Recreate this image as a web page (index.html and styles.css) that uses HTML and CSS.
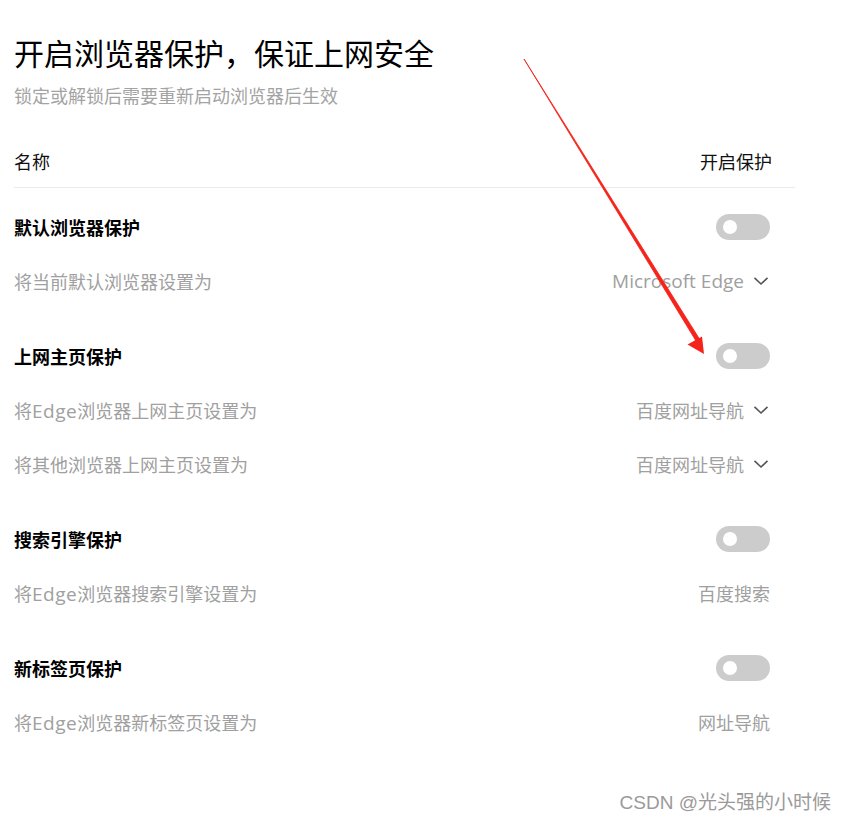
FILE: index.html
```html
<!DOCTYPE html>
<html lang="zh-CN">
<head>
<meta charset="utf-8">
<title>开启浏览器保护</title>
<link rel="stylesheet" href="styles.css">
</head>
<body>
<div class="page">
  <h1 class="title">开启浏览器保护，保证上网安全</h1>
  <p class="sub">锁定或解锁后需要重新启动浏览器后生效</p>
  <div class="head">
    <span>名称</span>
    <span class="head-right">开启保护</span>
  </div>
  <div class="list">
    <section class="group">
      <div class="row">
        <span class="name">默认浏览器保护</span>
        <span class="toggle"><span class="knob"></span></span>
      </div>
      <div class="row">
        <span class="label">将当前默认浏览器设置为</span>
        <span class="value latin">Microsoft Edge<svg class="chev" viewBox="0 0 16 10" width="16" height="10"><path d="M1.5 1.8 L8 8 L14.5 1.8" fill="none" stroke="#555" stroke-width="1.6"/></svg></span>
      </div>
    </section>
    <section class="group">
      <div class="row">
        <span class="name">上网主页保护</span>
        <span class="toggle"><span class="knob"></span></span>
      </div>
      <div class="row">
        <span class="label">将<span class="en">Edge</span>浏览器上网主页设置为</span>
        <span class="value">百度网址导航<svg class="chev" viewBox="0 0 16 10" width="16" height="10"><path d="M1.5 1.8 L8 8 L14.5 1.8" fill="none" stroke="#555" stroke-width="1.6"/></svg></span>
      </div>
      <div class="row">
        <span class="label">将其他浏览器上网主页设置为</span>
        <span class="value">百度网址导航<svg class="chev" viewBox="0 0 16 10" width="16" height="10"><path d="M1.5 1.8 L8 8 L14.5 1.8" fill="none" stroke="#555" stroke-width="1.6"/></svg></span>
      </div>
    </section>
    <section class="group">
      <div class="row">
        <span class="name">搜索引擎保护</span>
        <span class="toggle"><span class="knob"></span></span>
      </div>
      <div class="row">
        <span class="label">将<span class="en">Edge</span>浏览器搜索引擎设置为</span>
        <span class="value">百度搜索</span>
      </div>
    </section>
    <section class="group">
      <div class="row">
        <span class="name">新标签页保护</span>
        <span class="toggle"><span class="knob"></span></span>
      </div>
      <div class="row">
        <span class="label">将<span class="en">Edge</span>浏览器新标签页设置为</span>
        <span class="value">网址导航</span>
      </div>
    </section>
  </div>
</div>
<svg class="arrow" width="846" height="822" viewBox="0 0 846 822">
  <path d="M524 59 L696 341 L699.5 339 Z" fill="#f5231b" stroke="#f5231b" stroke-width="0.8" stroke-linejoin="round"/>
  <path d="M704 354 L687.5 344.5 L702 336.5 Z" fill="#f5231b"/>
</svg>
<div class="watermark">CSDN @光头强的小时候</div>
</body>
</html>
```

FILE: styles.css
```css
html, body {
  margin: 0;
  padding: 0;
  background: #fff;
}
body {
  width: 846px;
  height: 822px;
  position: relative;
  overflow: hidden;
  font-family: "Microsoft YaHei", "Noto Sans CJK SC", "Noto Sans", sans-serif;
  color: #000;
}
.page {
  padding: 32px 0 0 14px;
  width: 781px;
}
.title {
  margin: 0;
  font-size: 30px;
  font-weight: 400;
  line-height: 40px;
  color: #000;
}
.sub {
  margin: 11px 0 0;
  font-size: 18px;
  line-height: 24px;
  color: #a3a3a3;
}
.head {
  margin-top: 42px;
  height: 24px;
  line-height: 24px;
  padding: 0 23px 14px 0;
  border-bottom: 1px solid #eaeaea;
  display: flex;
  justify-content: space-between;
  font-size: 18px;
  color: #111;
}
.list {
  padding: 12px 25px 0 0;
  display: flex;
  flex-direction: column;
  gap: 21px;
}
.row {
  height: 54px;
  display: flex;
  align-items: center;
  justify-content: space-between;
  font-size: 18px;
}
.name {
  font-weight: 700;
  color: #000;
}
.label {
  color: #a0a0a0;
}
.en {
  font-family: "Open Sans", "Noto Sans", sans-serif;
  font-size: 19px;
  letter-spacing: 0.5px;
}
.value {
  color: #a0a0a0;
  display: flex;
  align-items: center;
}
.latin {
  font-family: "Open Sans", "Noto Sans", sans-serif;
  font-size: 19px;
}
.chev {
  margin-left: 9px;
  margin-right: 1px;
}
.toggle {
  width: 54px;
  height: 26px;
  border-radius: 13px;
  background: #cccccc;
  display: flex;
  align-items: center;
  padding-left: 7px;
  box-sizing: border-box;
}
.knob {
  width: 14px;
  height: 14px;
  border-radius: 50%;
  background: #fff;
}
.arrow {
  position: absolute;
  left: 0;
  top: 0;
  pointer-events: none;
}
.watermark {
  position: absolute;
  right: 15px;
  top: 791px;
  font-size: 19px;
  line-height: 24px;
  color: #9a9a9a;
  font-family: "Liberation Sans", "Noto Sans CJK SC", sans-serif;
}
```
